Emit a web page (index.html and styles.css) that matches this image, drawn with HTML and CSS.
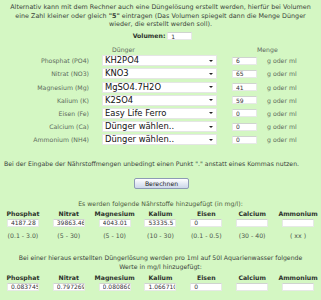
FILE: index.html
```html
<!DOCTYPE html>
<html lang="de">
<head>
    <meta charset="UTF-8">
    <title>Dünger Rechner</title>
    <link rel="stylesheet" href="styles.css">
</head>
<body>
    <div class="page">
        <p class="intro">Alternativ kann mit dem Rechner auch eine Düngelösung erstellt werden, hierfür bei Volumen eine Zahl kleiner oder gleich <b>"5"</b> eintragen (Das Volumen spiegelt dann die Menge Dünger wieder, die erstellt werden soll).</p>

        <div class="volume">
            <b>Volumen:</b> <input type="text" class="field vol" value="1">
        </div>

        <div class="mix">
            <div class="head">
                <span class="h-duenger">Dünger</span>
                <span class="h-menge">Menge</span>
            </div>
            <div class="row">
                <label>Phosphat (PO4)</label>
                <span class="pick"><select><option>KH2PO4</option></select></span>
                <input type="text" class="field amount" value="6">
                <span class="unit">g oder ml</span>
            </div>
            <div class="row">
                <label>Nitrat (NO3)</label>
                <span class="pick"><select><option>KNO3</option></select></span>
                <input type="text" class="field amount" value="65">
                <span class="unit">g oder ml</span>
            </div>
            <div class="row">
                <label>Magnesium (Mg)</label>
                <span class="pick"><select><option>MgSO4.7H2O</option></select></span>
                <input type="text" class="field amount" value="41">
                <span class="unit">g oder ml</span>
            </div>
            <div class="row">
                <label>Kalium (K)</label>
                <span class="pick"><select><option>K2SO4</option></select></span>
                <input type="text" class="field amount" value="59">
                <span class="unit">g oder ml</span>
            </div>
            <div class="row">
                <label>Eisen (Fe)</label>
                <span class="pick"><select><option>Easy Life Ferro</option></select></span>
                <input type="text" class="field amount" value="0">
                <span class="unit">g oder ml</span>
            </div>
            <div class="row">
                <label>Calcium (Ca)</label>
                <span class="pick"><select><option>Dünger wählen..</option></select></span>
                <input type="text" class="field amount" value="0">
                <span class="unit">g oder ml</span>
            </div>
            <div class="row">
                <label>Ammonium (NH4)</label>
                <span class="pick"><select><option>Dünger wählen..</option></select></span>
                <input type="text" class="field amount" value="0">
                <span class="unit">g oder ml</span>
            </div>
        </div>

        <p class="note">Bei der Eingabe der Nährstoffmengen unbedingt einen Punkt "." anstatt eines Kommas nutzen.</p>

        <div class="actions">
            <button class="calc">Berechnen</button>
        </div>

        <p class="caption">Es werden folgende Nährstoffe hinzugefügt (in mg/l):</p>
        <table class="result">
            <tr>
                <th>Phosphat</th><th>Nitrat</th><th>Magnesium</th><th>Kalium</th><th>Eisen</th><th>Calcium</th><th>Ammonium</th>
            </tr>
            <tr>
                <td><input type="text" class="field out" value="4187.28"></td>
                <td><input type="text" class="field out" value="39863.46"></td>
                <td><input type="text" class="field out" value="4043.01"></td>
                <td><input type="text" class="field out" value="53335.5"></td>
                <td><input type="text" class="field out" value="0"></td>
                <td><input type="text" class="field out" value=""></td>
                <td><input type="text" class="field out" value=""></td>
            </tr>
            <tr class="range">
                <td>(0.1 - 3.0)</td><td>(5 - 30)</td><td>(5 - 10)</td><td>(10 - 30)</td><td>(0.1 - 0.5)</td><td>(30 - 40)</td><td>( xx )</td>
            </tr>
        </table>

        <p class="caption second">Bei einer hieraus erstellten Düngerlösung werden pro 1ml auf 50l Aquarienwasser folgende Werte in mg/l hinzugefügt:</p>
        <table class="result">
            <tr>
                <th>Phosphat</th><th>Nitrat</th><th>Magnesium</th><th>Kalium</th><th>Eisen</th><th>Calcium</th><th>Ammonium</th>
            </tr>
            <tr>
                <td><input type="text" class="field out" value="0.0837456"></td>
                <td><input type="text" class="field out" value="0.7972692"></td>
                <td><input type="text" class="field out" value="0.0808602"></td>
                <td><input type="text" class="field out" value="1.0667100"></td>
                <td><input type="text" class="field out" value="0"></td>
                <td><input type="text" class="field out" value=""></td>
                <td><input type="text" class="field out" value=""></td>
            </tr>
        </table>
    </div>
</body>
</html>
```

FILE: styles.css
```css
body {
    margin: 0;
    background-color: #d4f7c3;
    color: #3b443b;
    font-family: "DejaVu Sans", Verdana, sans-serif;
    font-size: 6.2px;
}

.page {
    width: 321px;
    padding-top: 3px;
}

p {
    margin: 0;
}

.intro {
    text-align: center;
    font-size: 6.4px;
    line-height: 8.7px;
    padding: 0 7px;
}

.volume {
    text-align: center;
    margin-top: 3px;
    height: 9px;
    padding-left: 4px;
}

.volume b {
    color: #2c332c;
}

.field {
    box-sizing: border-box;
    background: white;
    border: 1px solid #e6e9e6;
    border-top-color: #cfd4cf;
    font-family: "DejaVu Sans", Verdana, sans-serif;
    font-size: 6px;
    color: #333;
    padding: 0 0 0 3px;
    margin: 0;
    vertical-align: middle;
}

.vol {
    width: 25px;
    height: 8px;
}

.mix {
    margin-top: 3px;
}

.head {
    display: flex;
    height: 10px;
    align-items: center;
    color: #606860;
}

.h-duenger {
    margin-left: 112px;
}

.h-menge {
    margin-left: 122px;
}

.row {
    display: flex;
    align-items: center;
    height: 13.2px;
}

.row label {
    width: 89px;
    text-align: right;
    color: #5d6b5d;
}

.pick {
    position: relative;
    margin-left: 13px;
    width: 115px;
    height: 11px;
}

.pick select {
    appearance: none;
    -webkit-appearance: none;
    box-sizing: border-box;
    width: 100%;
    height: 11px;
    border: 1px solid #e4e6e4;
    background: white;
    font-family: "DejaVu Sans", Verdana, sans-serif;
    font-size: 8.4px;
    color: #111;
    padding: 0 0 0 2px;
    margin: 0;
    line-height: 9px;
    border-radius: 0;
}

.pick::after {
    content: "";
    position: absolute;
    right: 4px;
    top: 4.5px;
    border-left: 2px solid transparent;
    border-right: 2px solid transparent;
    border-top: 2.5px solid #222;
    pointer-events: none;
}

.amount {
    width: 25px;
    height: 8px;
    margin-left: 15px;
}

.unit {
    margin-left: 10px;
    color: #5d6b5d;
}

.note {
    margin-top: 14px;
    padding-left: 4px;
    color: #3b443b;
}

.actions {
    text-align: center;
    margin-top: 11px;
}

.calc {
    width: 55px;
    height: 11px;
    padding: 0;
    font-family: "DejaVu Sans", Verdana, sans-serif;
    font-size: 6.2px;
    color: #222;
    border: 1px solid #8d9bb5;
    border-radius: 2px;
    background: linear-gradient(#ffffff, #dfe6f2 60%, #cdd7ea);
    margin-left: 2px;
}

.caption {
    text-align: center;
    margin-top: 11px;
    color: #4c5a3c;
}

.second {
    margin-top: 12px;
    line-height: 9px;
    padding: 0 14px;
    color: #3b443b;
}

.result {
    width: 321px;
    table-layout: fixed;
    border-collapse: collapse;
    margin-top: 2px;
}

.result th {
    font-weight: bold;
    color: #2c322c;
    height: 9px;
    padding: 0;
    font-size: 6.2px;
}

.result td {
    text-align: center;
    padding: 0;
    height: 9px;
}

.out {
    width: 32px;
    height: 8.5px;
    text-align: left;
}

.range td {
    color: #4c564c;
    height: 11px;
    padding-top: 3px;
}
```
